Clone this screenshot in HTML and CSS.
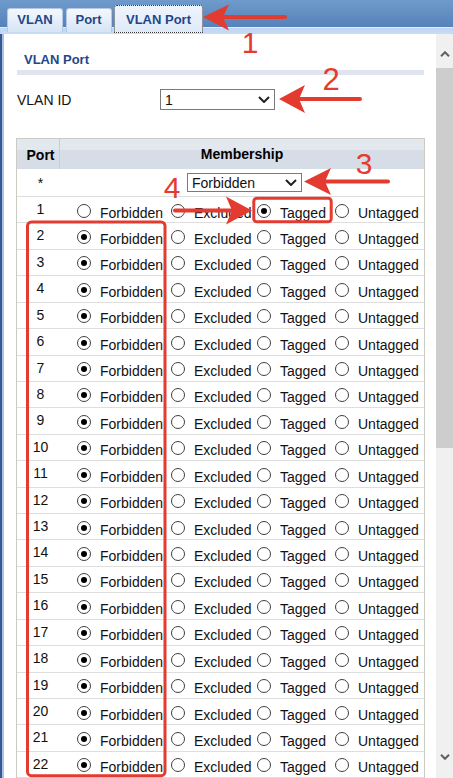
FILE: index.html
```html
<!DOCTYPE html>
<html>
<head>
<meta charset="utf-8">
<link rel="stylesheet" href="styles.css">
</head>
<body>
<div class="page">
  <div class="topbar">
    <div class="tabs">
      <div class="tab t1">VLAN</div>
      <div class="tab t2">Port</div>
      <div class="tab t3 active">VLAN Port</div>
    </div>
  </div>
  <div class="main">
    <div class="edge"></div>
    <div class="content">
      <div class="title">VLAN Port</div>
      <div class="titlebar"></div>
      <div class="field">
        <span class="field-label">VLAN ID</span>
        <div class="select"><span>1</span><svg class="chev" width="12" height="7" viewBox="0 0 12 7"><path d="M1 1 L6 6 L11 1" fill="none" stroke="#222" stroke-width="2"/></svg></div>
      </div>
      <div class="tbl">
        <div class="thead"><div class="c-port">Port</div><div class="c-mem">Membership</div></div>
        <div class="row star"><div class="c-port">*</div><div class="c-mem"><div class="select sm"><span>Forbidden</span><svg class="chev" width="12" height="7" viewBox="0 0 12 7"><path d="M1 1 L6 6 L11 1" fill="none" stroke="#222" stroke-width="2"/></svg></div></div></div>
        <div class="row"><div class="c-port">1</div><div class="c-mem"><div class="opt"><span class="radio"></span><span class="lbl">Forbidden</span></div><div class="opt"><span class="radio"></span><span class="lbl">Excluded</span></div><div class="opt"><span class="radio on"></span><span class="lbl">Tagged</span></div><div class="opt"><span class="radio"></span><span class="lbl">Untagged</span></div></div></div>
        <div class="row"><div class="c-port">2</div><div class="c-mem"><div class="opt"><span class="radio on"></span><span class="lbl">Forbidden</span></div><div class="opt"><span class="radio"></span><span class="lbl">Excluded</span></div><div class="opt"><span class="radio"></span><span class="lbl">Tagged</span></div><div class="opt"><span class="radio"></span><span class="lbl">Untagged</span></div></div></div>
        <div class="row"><div class="c-port">3</div><div class="c-mem"><div class="opt"><span class="radio on"></span><span class="lbl">Forbidden</span></div><div class="opt"><span class="radio"></span><span class="lbl">Excluded</span></div><div class="opt"><span class="radio"></span><span class="lbl">Tagged</span></div><div class="opt"><span class="radio"></span><span class="lbl">Untagged</span></div></div></div>
        <div class="row"><div class="c-port">4</div><div class="c-mem"><div class="opt"><span class="radio on"></span><span class="lbl">Forbidden</span></div><div class="opt"><span class="radio"></span><span class="lbl">Excluded</span></div><div class="opt"><span class="radio"></span><span class="lbl">Tagged</span></div><div class="opt"><span class="radio"></span><span class="lbl">Untagged</span></div></div></div>
        <div class="row"><div class="c-port">5</div><div class="c-mem"><div class="opt"><span class="radio on"></span><span class="lbl">Forbidden</span></div><div class="opt"><span class="radio"></span><span class="lbl">Excluded</span></div><div class="opt"><span class="radio"></span><span class="lbl">Tagged</span></div><div class="opt"><span class="radio"></span><span class="lbl">Untagged</span></div></div></div>
        <div class="row"><div class="c-port">6</div><div class="c-mem"><div class="opt"><span class="radio on"></span><span class="lbl">Forbidden</span></div><div class="opt"><span class="radio"></span><span class="lbl">Excluded</span></div><div class="opt"><span class="radio"></span><span class="lbl">Tagged</span></div><div class="opt"><span class="radio"></span><span class="lbl">Untagged</span></div></div></div>
        <div class="row"><div class="c-port">7</div><div class="c-mem"><div class="opt"><span class="radio on"></span><span class="lbl">Forbidden</span></div><div class="opt"><span class="radio"></span><span class="lbl">Excluded</span></div><div class="opt"><span class="radio"></span><span class="lbl">Tagged</span></div><div class="opt"><span class="radio"></span><span class="lbl">Untagged</span></div></div></div>
        <div class="row"><div class="c-port">8</div><div class="c-mem"><div class="opt"><span class="radio on"></span><span class="lbl">Forbidden</span></div><div class="opt"><span class="radio"></span><span class="lbl">Excluded</span></div><div class="opt"><span class="radio"></span><span class="lbl">Tagged</span></div><div class="opt"><span class="radio"></span><span class="lbl">Untagged</span></div></div></div>
        <div class="row"><div class="c-port">9</div><div class="c-mem"><div class="opt"><span class="radio on"></span><span class="lbl">Forbidden</span></div><div class="opt"><span class="radio"></span><span class="lbl">Excluded</span></div><div class="opt"><span class="radio"></span><span class="lbl">Tagged</span></div><div class="opt"><span class="radio"></span><span class="lbl">Untagged</span></div></div></div>
        <div class="row"><div class="c-port">10</div><div class="c-mem"><div class="opt"><span class="radio on"></span><span class="lbl">Forbidden</span></div><div class="opt"><span class="radio"></span><span class="lbl">Excluded</span></div><div class="opt"><span class="radio"></span><span class="lbl">Tagged</span></div><div class="opt"><span class="radio"></span><span class="lbl">Untagged</span></div></div></div>
        <div class="row"><div class="c-port">11</div><div class="c-mem"><div class="opt"><span class="radio on"></span><span class="lbl">Forbidden</span></div><div class="opt"><span class="radio"></span><span class="lbl">Excluded</span></div><div class="opt"><span class="radio"></span><span class="lbl">Tagged</span></div><div class="opt"><span class="radio"></span><span class="lbl">Untagged</span></div></div></div>
        <div class="row"><div class="c-port">12</div><div class="c-mem"><div class="opt"><span class="radio on"></span><span class="lbl">Forbidden</span></div><div class="opt"><span class="radio"></span><span class="lbl">Excluded</span></div><div class="opt"><span class="radio"></span><span class="lbl">Tagged</span></div><div class="opt"><span class="radio"></span><span class="lbl">Untagged</span></div></div></div>
        <div class="row"><div class="c-port">13</div><div class="c-mem"><div class="opt"><span class="radio on"></span><span class="lbl">Forbidden</span></div><div class="opt"><span class="radio"></span><span class="lbl">Excluded</span></div><div class="opt"><span class="radio"></span><span class="lbl">Tagged</span></div><div class="opt"><span class="radio"></span><span class="lbl">Untagged</span></div></div></div>
        <div class="row"><div class="c-port">14</div><div class="c-mem"><div class="opt"><span class="radio on"></span><span class="lbl">Forbidden</span></div><div class="opt"><span class="radio"></span><span class="lbl">Excluded</span></div><div class="opt"><span class="radio"></span><span class="lbl">Tagged</span></div><div class="opt"><span class="radio"></span><span class="lbl">Untagged</span></div></div></div>
        <div class="row"><div class="c-port">15</div><div class="c-mem"><div class="opt"><span class="radio on"></span><span class="lbl">Forbidden</span></div><div class="opt"><span class="radio"></span><span class="lbl">Excluded</span></div><div class="opt"><span class="radio"></span><span class="lbl">Tagged</span></div><div class="opt"><span class="radio"></span><span class="lbl">Untagged</span></div></div></div>
        <div class="row"><div class="c-port">16</div><div class="c-mem"><div class="opt"><span class="radio on"></span><span class="lbl">Forbidden</span></div><div class="opt"><span class="radio"></span><span class="lbl">Excluded</span></div><div class="opt"><span class="radio"></span><span class="lbl">Tagged</span></div><div class="opt"><span class="radio"></span><span class="lbl">Untagged</span></div></div></div>
        <div class="row"><div class="c-port">17</div><div class="c-mem"><div class="opt"><span class="radio on"></span><span class="lbl">Forbidden</span></div><div class="opt"><span class="radio"></span><span class="lbl">Excluded</span></div><div class="opt"><span class="radio"></span><span class="lbl">Tagged</span></div><div class="opt"><span class="radio"></span><span class="lbl">Untagged</span></div></div></div>
        <div class="row"><div class="c-port">18</div><div class="c-mem"><div class="opt"><span class="radio on"></span><span class="lbl">Forbidden</span></div><div class="opt"><span class="radio"></span><span class="lbl">Excluded</span></div><div class="opt"><span class="radio"></span><span class="lbl">Tagged</span></div><div class="opt"><span class="radio"></span><span class="lbl">Untagged</span></div></div></div>
        <div class="row"><div class="c-port">19</div><div class="c-mem"><div class="opt"><span class="radio on"></span><span class="lbl">Forbidden</span></div><div class="opt"><span class="radio"></span><span class="lbl">Excluded</span></div><div class="opt"><span class="radio"></span><span class="lbl">Tagged</span></div><div class="opt"><span class="radio"></span><span class="lbl">Untagged</span></div></div></div>
        <div class="row"><div class="c-port">20</div><div class="c-mem"><div class="opt"><span class="radio on"></span><span class="lbl">Forbidden</span></div><div class="opt"><span class="radio"></span><span class="lbl">Excluded</span></div><div class="opt"><span class="radio"></span><span class="lbl">Tagged</span></div><div class="opt"><span class="radio"></span><span class="lbl">Untagged</span></div></div></div>
        <div class="row"><div class="c-port">21</div><div class="c-mem"><div class="opt"><span class="radio on"></span><span class="lbl">Forbidden</span></div><div class="opt"><span class="radio"></span><span class="lbl">Excluded</span></div><div class="opt"><span class="radio"></span><span class="lbl">Tagged</span></div><div class="opt"><span class="radio"></span><span class="lbl">Untagged</span></div></div></div>
        <div class="row"><div class="c-port">22</div><div class="c-mem"><div class="opt"><span class="radio on"></span><span class="lbl">Forbidden</span></div><div class="opt"><span class="radio"></span><span class="lbl">Excluded</span></div><div class="opt"><span class="radio"></span><span class="lbl">Tagged</span></div><div class="opt"><span class="radio"></span><span class="lbl">Untagged</span></div></div></div>
      </div>
    </div>
    <div class="scrollbar">
      <div class="sb-btn sb-up"><svg width="10" height="6" viewBox="0 0 10 6"><path d="M1 5.2 L5 1.2 L9 5.2" fill="none" stroke="#606060" stroke-width="2"/></svg></div>
      <div class="sb-thumb"></div>
      <div class="sb-track"></div>
      <div class="sb-btn sb-down"><svg width="10" height="6" viewBox="0 0 10 6"><path d="M1 0.8 L5 4.8 L9 0.8" fill="none" stroke="#606060" stroke-width="2"/></svg></div>
    </div>
  </div>
  <svg class="annot" width="453" height="778" viewBox="0 0 453 778">
    <g fill="#e43b30">
      <polygon points="203,17 229,4.5 223,17 229,30.5"/>
      <polygon points="279,99 305,85 299,99 305,113"/>
      <polygon points="304,181.5 331,168 325,181.5 331,195"/>
      <polygon points="252,210.5 226,196.5 232,210.5 226,224.5"/>
    </g>
    <g stroke="#e43b30" stroke-width="4" stroke-linecap="round" fill="none">
      <line x1="222" y1="17" x2="285" y2="17"/>
      <line x1="298" y1="99" x2="360" y2="99"/>
      <line x1="324" y1="181.5" x2="388" y2="181.5"/>
      <line x1="175" y1="210.5" x2="233" y2="210.5"/>
      <rect x="253.8" y="198.2" width="77.4" height="23.6" rx="3" stroke-width="3"/>
      <rect x="27.5" y="222" width="137.5" height="553.7" rx="4" stroke-width="3"/>
    </g>
    <g class="nums" fill="#e43b30" text-anchor="middle">
      <text x="250" y="53" font-size="30">1</text>
      <text x="331" y="89.5" font-size="31">2</text>
      <text x="364" y="174" font-size="30">3</text>
      <text x="172" y="198" font-size="30">4</text>
    </g>
  </svg>
</div>
</body>
</html>
```

FILE: styles.css
```css
* { box-sizing: border-box; }
html, body { margin: 0; padding: 0; }
body {
  width: 453px;
  height: 778px;
  overflow: hidden;
  font-family: "Liberation Sans", Arial, sans-serif;
  font-size: 14px;
  color: #000;
  background: #fff;
}
.page { position: relative; width: 453px; height: 778px; overflow: hidden; }

.topbar {
  height: 34px;
  padding-left: 7px;
  background: linear-gradient(to bottom, #6f9acb 0, #5582b9 27px, #dfeafa 27px, #dfeafa 28px, #bfd5f2 28px, #c9dcf5 34px);
}
.tabs { display: flex; align-items: flex-end; height: 33px; gap: 2.5px; }
.tab {
  height: 24px;
  margin-bottom: 1px;
  border: 1px solid #b3c8e6;
  border-bottom: none;
  border-radius: 3px 3px 0 0;
  background: linear-gradient(#f4f8fd, #d6e4f6);
  color: #1f4787;
  font-weight: bold;
  font-size: 13px;
  line-height: 15px;
  text-align: center;
  padding-top: 2.5px;
}
.t1 { width: 56px; }
.t2 { width: 46px; }
.t3 { width: 89px; }
.tab.active {
  height: 28px;
  margin-bottom: 0;
  border: 1px dotted #3c3c3c;
  background: linear-gradient(#eef4fc, #dfeaf8);
  padding-top: 5.5px;
}

.main { display: flex; height: 744px; }
.edge { width: 4px; flex: none; background: linear-gradient(to right, #36588e 0 2px, #a6c2ea 2px 4px); }
.content { width: 432px; flex: none; padding: 0 11px 0 12px; overflow: hidden; }

.title {
  margin: 18px 0 0 8px;
  height: 16px;
  line-height: 16px;
  font-size: 13px;
  font-weight: bold;
  color: #1f4787;
}
.titlebar { margin: 2px 1px 0 1px; height: 5px; background: #dfe4ee; }

.field { display: flex; align-items: center; margin-top: 14px; height: 21px; }
.field-label { width: 144px; padding-left: 1px; color: #111; }

.select {
  display: flex;
  align-items: center;
  justify-content: space-between;
  width: 115px;
  height: 21px;
  border: 1px solid #7a7a7a;
  background: #fff;
  padding: 0 4px;
  font-size: 14px;
  color: #111;
}
.select.sm { height: 19px; }
.chev { display: block; flex: none; }

.tbl { margin-top: 28px; border: 1px solid #cbcbc4; border-bottom: none; }
.thead {
  display: flex;
  align-items: center;
  height: 30px;
  background: linear-gradient(#e3e8ef 0 11px, #d6dde7 11px);
  font-weight: bold;
  line-height: 16px;
}
.c-port {
  width: 43px;
  flex: none;
  padding-left: 5px;
  text-align: center;
  border-right: 1px solid transparent;
  line-height: 16px;
}
.thead .c-port { border-right-color: #c8cdd4; height: 30px; padding-top: 8px; }
.thead .c-mem { flex: 1; text-align: center; }

.row { display: flex; height: 26.43px; border-bottom: 1px solid #dedede; color: #111; }
.row .c-port { padding-top: 4px; }
.row .c-mem {
  flex: 1;
  display: grid;
  grid-template-columns: 94px 86px 78px auto;
  padding: 6.5px 0 0 17px;
}
.row.star { height: 28px; align-items: center; }
.row.star .c-port { padding-top: 0; }
.row.star .c-mem { display: flex; padding: 0 0 0 127px; }

.opt { display: flex; align-items: flex-start; }
.radio {
  position: relative;
  flex: none;
  width: 14px;
  height: 14px;
  margin-right: 9px;
  border: 1px solid #404040;
  border-radius: 50%;
  background: #fff;
}
.radio.on::after {
  content: "";
  position: absolute;
  left: 3px;
  top: 3px;
  width: 6px;
  height: 6px;
  border-radius: 50%;
  background: #000;
}
.lbl { line-height: 16px; margin-top: 1px; white-space: nowrap; }

.scrollbar { width: 17px; flex: none; background: #f0f0f0; display: flex; flex-direction: column; }
.sb-btn { height: 34px; flex: none; display: flex; align-items: center; justify-content: center; }
.sb-btn svg { display: block; }
.sb-up { padding-top: 5px; }
.sb-thumb { height: 380px; flex: none; background: #cdcdcd; }
.sb-track { flex: 1; }
.sb-down { margin-bottom: 4px; }

.annot { position: absolute; left: 0; top: 0; pointer-events: none; }
.nums { font-family: "Liberation Sans", Arial, sans-serif; }
```
